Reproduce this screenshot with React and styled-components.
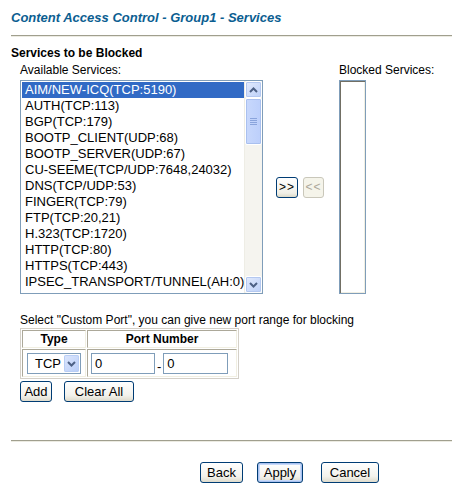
import styled, { createGlobalStyle } from "styled-components";

const services = [
  "AIM/NEW-ICQ(TCP:5190)",
  "AUTH(TCP:113)",
  "BGP(TCP:179)",
  "BOOTP_CLIENT(UDP:68)",
  "BOOTP_SERVER(UDP:67)",
  "CU-SEEME(TCP/UDP:7648,24032)",
  "DNS(TCP/UDP:53)",
  "FINGER(TCP:79)",
  "FTP(TCP:20,21)",
  "H.323(TCP:1720)",
  "HTTP(TCP:80)",
  "HTTPS(TCP:443)",
  "IPSEC_TRANSPORT/TUNNEL(AH:0)",
];

const GlobalStyle = createGlobalStyle`
  body {
    margin: 0;
    background: #fff;
    font-family: "Liberation Sans", Arial, sans-serif;
    color: #000;
  }
`;

const Page = styled.div`
  width: 452px;
  padding: 10px 0 0 11px;
  box-sizing: border-box;
`;

const Title = styled.div`
  font-size: 13px;
  font-weight: bold;
  font-style: italic;
  color: #0b5e91;
  line-height: 16px;
`;

const Rule = styled.div`
  height: 1px;
  background: #a09f8e;
  border-bottom: 1px solid #ecebe2;
  margin: ${(p) => p.$margin};
`;

const Heading = styled.div`
  font-size: 12px;
  font-weight: bold;
  line-height: 15px;
`;

const Label = styled.div`
  font-size: 12px;
  line-height: 15px;
  white-space: nowrap;
`;

const Picker = styled.div`
  display: grid;
  grid-template-columns: 243px auto auto;
  grid-template-rows: auto auto;
  justify-content: start;
  margin: 2px 0 0 9px;
  row-gap: 2px;
`;

const ListBox = styled.div`
  grid-row: 2;
  width: 243px;
  height: 214px;
  box-sizing: border-box;
  border: 1px solid #7f9db9;
  display: flex;
  background: #fff;
`;

const Items = styled.div`
  flex: 1;
  padding: 1px 0 0 1px;
  overflow: hidden;
`;

const Item = styled.div`
  font-size: 13px;
  line-height: 16px;
  height: 16px;
  padding-left: 3px;
  white-space: nowrap;
  background: ${(p) => (p.$selected ? "#316ac5" : "transparent")};
  color: ${(p) => (p.$selected ? "#fff" : "#000")};
`;

const ScrollBar = styled.div`
  width: 17px;
  flex: none;
  background: #f5f4ef;
  border-left: 1px solid #eeede5;
  display: flex;
  flex-direction: column;
  justify-content: space-between;
`;

const ScrollTop = styled.div`
  display: flex;
  flex-direction: column;
`;

const ArrowButton = styled.div`
  width: 17px;
  height: 17px;
  box-sizing: border-box;
  border: 1px solid #fff;
  border-radius: 2px;
  background: linear-gradient(135deg, #e3ebfd, #bcd0f8);
  box-shadow: inset 0 0 0 1px #b4c8f0;
  display: flex;
  align-items: center;
  justify-content: center;
`;

const Thumb = styled.div`
  width: 17px;
  height: 47px;
  box-sizing: border-box;
  border: 1px solid #fff;
  border-radius: 2px;
  background: linear-gradient(90deg, #c8d8fc, #bccffb);
  box-shadow: inset 0 0 0 1px #a9c0ef;
  display: flex;
  align-items: center;
  justify-content: center;
`;

const MoveButtons = styled.div`
  grid-row: 2;
  display: flex;
  align-items: center;
  gap: 5px;
  padding: 0 15px 0 13px;
`;

const SmallButton = styled.button`
  width: ${(p) => p.$w}px;
  height: 21px;
  padding: 0;
  box-sizing: border-box;
  border: 1px solid ${(p) => (p.disabled ? "#c9c7ba" : "#003c74")};
  border-radius: 3px;
  background: ${(p) =>
    p.disabled ? "#f5f4ea" : "linear-gradient(180deg, #ffffff 0%, #f0efe6 80%, #dcd9c8 100%)"};
  color: ${(p) => (p.disabled ? "#aca899" : "#000")};
  font-family: "Liberation Sans", Arial, sans-serif;
  font-size: 12px;
  letter-spacing: 1px;
  line-height: 19px;
`;

const BlockedBox = styled.div`
  grid-row: 2;
  width: 27px;
  height: 214px;
  box-sizing: border-box;
  border: 1px solid #7f9db9;
  box-shadow: inset 1px 1px 0 #716f64, inset -1px -1px 0 #f1efe2;
  background: #fff;
`;

const Hint = styled.div`
  font-size: 12px;
  line-height: 15px;
  margin: 19px 0 0 9px;
  white-space: nowrap;
`;

const PortTable = styled.table`
  margin-left: 9px;
  border-collapse: separate;
  border-spacing: 1px;
  border: 1px solid #d4d0c8;
  width: 219px;
  box-sizing: border-box;
`;

const HeadCell = styled.th`
  font-size: 12px;
  font-weight: bold;
  height: 16px;
  padding: 0;
  border: 1px solid #aca899;
  border-color: #aca899 #f1efe2 #f1efe2 #aca899;
  text-align: center;
  width: ${(p) => p.$w || "auto"};
`;

const Cell = styled.td`
  padding: 3px 3px 2px;
  border: 1px solid #aca899;
  border-color: #aca899 #f1efe2 #f1efe2 #aca899;
  height: 21px;
`;

const CellRow = styled.div`
  display: flex;
  align-items: flex-end;
  justify-content: ${(p) => p.$justify || "flex-start"};
  gap: 2px;
`;

const Select = styled.div`
  width: 54px;
  height: 21px;
  box-sizing: border-box;
  border: 1px solid #7f9db9;
  display: flex;
  align-items: center;
  justify-content: space-between;
  padding: 1px;
  background: #fff;
`;

const SelectText = styled.span`
  font-size: 13px;
  padding-left: 6px;
`;

const SelectArrow = styled.div`
  width: 15px;
  height: 17px;
  border-radius: 2px;
  background: linear-gradient(135deg, #dde7fd, #b8cdf8);
  box-shadow: inset 0 0 0 1px #b9cef5;
  display: flex;
  align-items: center;
  justify-content: center;
`;

const Input = styled.div`
  width: ${(p) => p.$w}px;
  height: 21px;
  box-sizing: border-box;
  border: 1px solid #7f9db9;
  font-size: 13px;
  line-height: 19px;
  padding-left: 3px;
  background: #fff;
`;

const Dash = styled.span`
  font-size: 13px;
  line-height: 14px;
`;

const ActionRow = styled.div`
  display: flex;
  gap: ${(p) => p.$gap || "12px"};
  margin: ${(p) => p.$margin};
`;

const Button = styled.button`
  height: 21px;
  padding: 0;
  width: ${(p) => p.$w}px;
  box-sizing: border-box;
  border: 1px solid #003c74;
  border-radius: 3px;
  background: linear-gradient(180deg, #ffffff 0%, #f3f2ec 70%, #dedbcc 100%);
  box-shadow: ${(p) => (p.$focused ? "inset 0 0 0 1px #a8c1f0, inset 0 0 0 2px #c8d9f8" : "none")};
  font-family: "Liberation Sans", Arial, sans-serif;
  font-size: 13px;
  color: #000;
  line-height: 19px;
`;

const Arrow = ({ up }) => (
  <svg width="9" height="6" viewBox="0 0 9 6">
    <path
      d={up ? "M1 5 L4.5 1.5 L8 5" : "M1 1 L4.5 4.5 L8 1"}
      fill="none"
      stroke="#4d6185"
      strokeWidth="2"
    />
  </svg>
);

const Grip = () => (
  <svg width="7" height="8" viewBox="0 0 7 8">
    {[0, 2, 4, 6].map((y) => (
      <rect key={y} x="0" y={y} width="7" height="1" fill="#8aa4dc" />
    ))}
  </svg>
);

export default function App() {
  return (
    <Page>
      <GlobalStyle />
      <Title>Content Access Control - Group1 - Services</Title>
      <Rule $margin="9px 0 9px 0" />
      <Heading>Services to be Blocked</Heading>

      <Picker>
        <Label>Available Services:</Label>
        <div />
        <Label>Blocked Services:</Label>

        <ListBox>
          <Items>
            {services.map((s, i) => (
              <Item key={s} $selected={i === 0}>
                {s}
              </Item>
            ))}
          </Items>
          <ScrollBar>
            <ScrollTop>
              <ArrowButton>
                <Arrow up />
              </ArrowButton>
              <Thumb>
                <Grip />
              </Thumb>
            </ScrollTop>
            <ArrowButton>
              <Arrow />
            </ArrowButton>
          </ScrollBar>
        </ListBox>

        <MoveButtons>
          <SmallButton $w={22}>&gt;&gt;</SmallButton>
          <SmallButton $w={21} disabled>
            &lt;&lt;
          </SmallButton>
        </MoveButtons>

        <BlockedBox />
      </Picker>

      <Hint>Select "Custom Port", you can give new port range for blocking</Hint>
      <PortTable>
        <thead>
          <tr>
            <HeadCell $w="62px">Type</HeadCell>
            <HeadCell>Port Number</HeadCell>
          </tr>
        </thead>
        <tbody>
          <tr>
            <Cell>
              <CellRow $justify="center">
                <Select>
                  <SelectText>TCP</SelectText>
                  <SelectArrow>
                    <Arrow />
                  </SelectArrow>
                </Select>
              </CellRow>
            </Cell>
            <Cell>
              <CellRow>
                <Input $w={64}>0</Input>
                <Dash>-</Dash>
                <Input $w={65}>0</Input>
              </CellRow>
            </Cell>
          </tr>
        </tbody>
      </PortTable>

      <ActionRow $gap="12px" $margin="2px 0 0 9px">
        <Button $w={32}>Add</Button>
        <Button $w={70}>Clear All</Button>
      </ActionRow>

      <Rule $margin="38px 0 20px 0" />

      <ActionRow $gap="14px" $margin="0 0 0 189px">
        <Button $w={43}>Back</Button>
        <Button $w={46} $focused>
          Apply
        </Button>
        <Button $w={58} style={{ marginLeft: 4 }}>
          Cancel
        </Button>
      </ActionRow>
    </Page>
  );
}
